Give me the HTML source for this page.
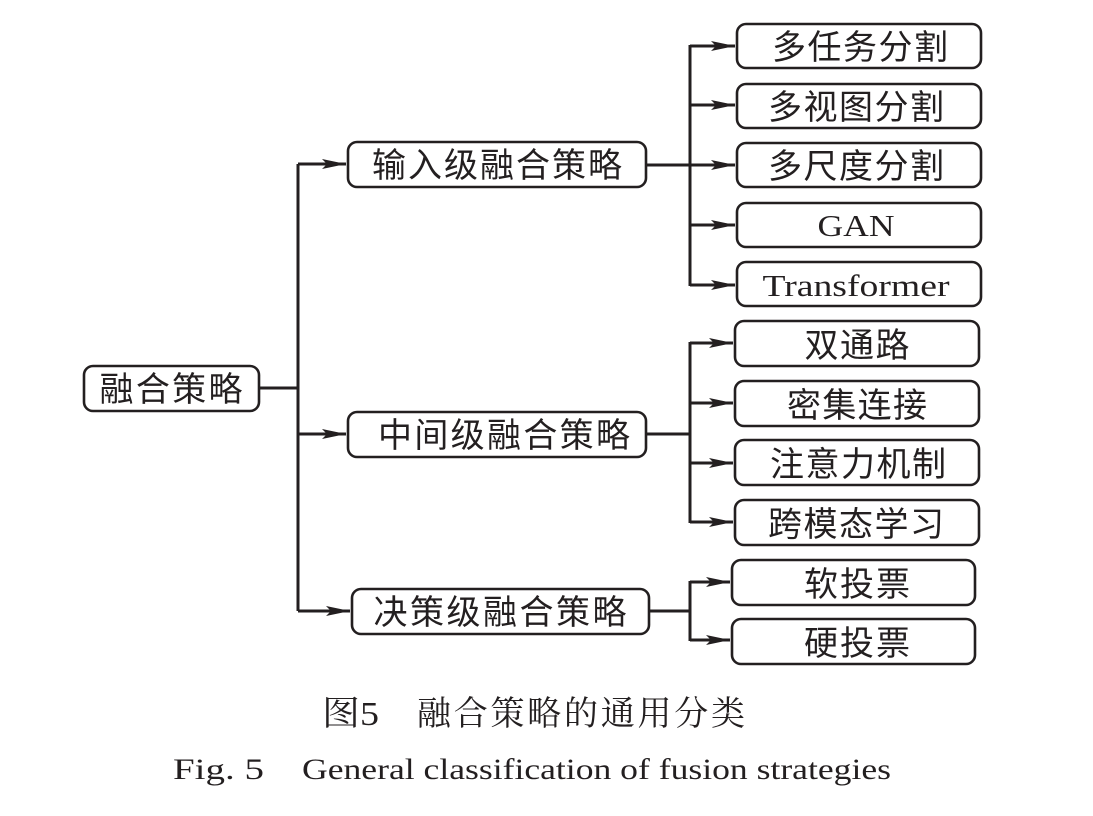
<!DOCTYPE html>
<html><head><meta charset="utf-8"><style>
html,body{margin:0;padding:0;background:#fff;width:1093px;height:816px;overflow:hidden}
svg text{font-family:"Liberation Serif","Noto Serif CJK SC",serif;fill:#231f20}
.b{fill:#fff;stroke:#231f20;stroke-width:2.6}
.l{stroke:#231f20;stroke-width:3;fill:none}
.t{font-family:"Liberation Sans","Noto Sans CJK SC",sans-serif;font-size:34px;text-anchor:middle}
</style></head><body>
<svg width="1093" height="816" viewBox="0 0 1093 816" xmlns="http://www.w3.org/2000/svg">
<defs>
<marker id="b2" markerWidth="24" markerHeight="12" refX="24" refY="6" orient="auto" markerUnits="userSpaceOnUse" viewBox="0 0 24 12"><path d="M0,1 L24,6 L0,11 L5,6 Z" fill="#231f20"/></marker></defs>

<rect class="b" x="84" y="366" width="175" height="45" rx="9"/>
<text class="t" x="171" y="401" textLength="143" lengthAdjust="spacing">融合策略</text>
<path class="l" d="M259,388 H298 M298,164 V611"/>
<path class="l" d="M298,164 H346" marker-end="url(#b2)"/>
<path class="l" d="M298,434 H346" marker-end="url(#b2)"/>
<path class="l" d="M298,611 H350" marker-end="url(#b2)"/>

<rect class="b" x="348" y="142" width="298" height="45" rx="9"/>
<text class="t" x="497" y="177" textLength="250" lengthAdjust="spacing">输入级融合策略</text>
<rect class="b" x="348" y="412" width="298" height="45" rx="9"/>
<text class="t" x="504" y="447" textLength="252" lengthAdjust="spacing">中间级融合策略</text>
<rect class="b" x="352" y="589" width="297" height="45" rx="9"/>
<text class="t" x="500" y="624" textLength="253" lengthAdjust="spacing">决策级融合策略</text>

<path class="l" d="M646,165 H690 M690,45 V286"/>
<path class="l" d="M690,46 H735" marker-end="url(#b2)"/>
<path class="l" d="M690,105 H735" marker-end="url(#b2)"/>
<path class="l" d="M690,165 H735" marker-end="url(#b2)"/>
<path class="l" d="M690,225 H735" marker-end="url(#b2)"/>
<path class="l" d="M690,285 H735" marker-end="url(#b2)"/>
<rect class="b" x="737" y="24" width="244" height="44" rx="9"/><text class="t" x="860" y="59" textLength="176" lengthAdjust="spacing">多任务分割</text>
<rect class="b" x="737" y="84" width="244" height="44" rx="9"/><text class="t" x="856" y="119" textLength="176" lengthAdjust="spacing">多视图分割</text>
<rect class="b" x="737" y="143" width="244" height="44" rx="9"/><text class="t" x="856" y="178" textLength="176" lengthAdjust="spacing">多尺度分割</text>
<rect class="b" x="737" y="203" width="244" height="44" rx="9"/><text class="t" x="856" y="236" style="font-family:'Liberation Serif',serif;font-size:31px" textLength="77" lengthAdjust="spacingAndGlyphs">GAN</text>
<rect class="b" x="737" y="262" width="244" height="44" rx="9"/><text class="t" x="856" y="296" style="font-family:'Liberation Serif',serif;font-size:31px" textLength="187" lengthAdjust="spacingAndGlyphs">Transformer</text>

<path class="l" d="M646,434 H690 M690,342 V523"/>
<path class="l" d="M690,343 H733" marker-end="url(#b2)"/>
<path class="l" d="M690,403 H733" marker-end="url(#b2)"/>
<path class="l" d="M690,463 H733" marker-end="url(#b2)"/>
<path class="l" d="M690,522 H733" marker-end="url(#b2)"/>
<rect class="b" x="735" y="321" width="244" height="45" rx="9"/><text class="t" x="857" y="357" textLength="105" lengthAdjust="spacing">双通路</text>
<rect class="b" x="735" y="381" width="244" height="45" rx="9"/><text class="t" x="857" y="417" textLength="140" lengthAdjust="spacing">密集连接</text>
<rect class="b" x="735" y="440" width="244" height="45" rx="9"/><text class="t" x="858" y="476" textLength="176" lengthAdjust="spacing">注意力机制</text>
<rect class="b" x="735" y="500" width="244" height="45" rx="9"/><text class="t" x="856" y="536" textLength="176" lengthAdjust="spacing">跨模态学习</text>

<path class="l" d="M649,611 H690 M690,581 V641"/>
<path class="l" d="M690,582 H730" marker-end="url(#b2)"/>
<path class="l" d="M690,640 H730" marker-end="url(#b2)"/>
<rect class="b" x="732" y="560" width="243" height="45" rx="9"/><text class="t" x="857" y="596" textLength="106" lengthAdjust="spacing">软投票</text>
<rect class="b" x="732" y="619" width="243" height="45" rx="9"/><text class="t" x="857" y="655" textLength="106" lengthAdjust="spacing">硬投票</text>

<text x="322" y="725" font-size="34" textLength="57" lengthAdjust="spacingAndGlyphs">图5</text>
<text x="417" y="725" font-size="34" textLength="328" lengthAdjust="spacing">融合策略的通用分类</text>
<text x="173" y="779" font-size="30" textLength="91" lengthAdjust="spacingAndGlyphs">Fig.  5</text>
<text x="302" y="779" font-size="30" textLength="589" lengthAdjust="spacingAndGlyphs">General classification of fusion strategies</text>
</svg>
</body></html>
